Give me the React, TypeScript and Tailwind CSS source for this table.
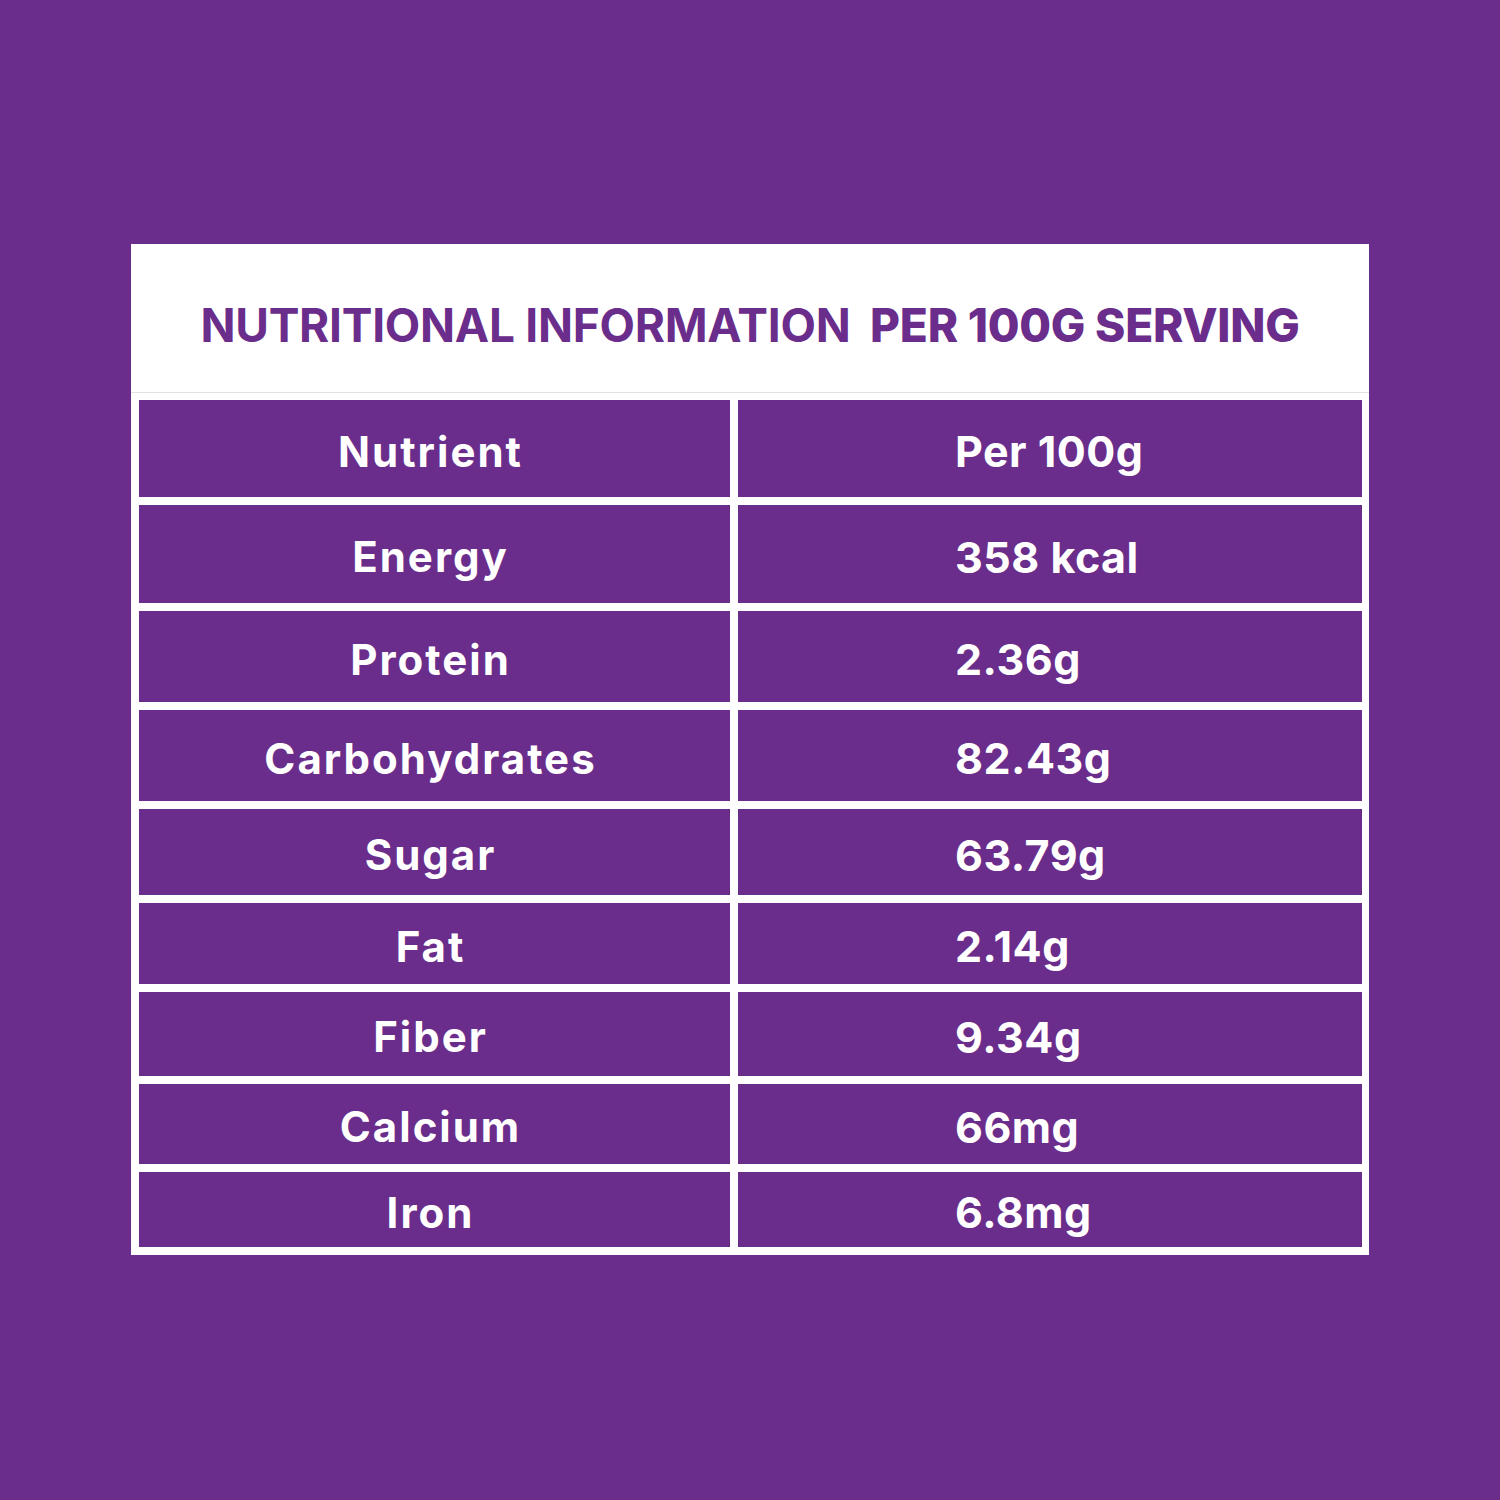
import React from "react";

const rows: { n: string; v: string; h: number }[] = [
  { n: "Nutrient", v: "Per 100g", h: 97 },
  { n: "Energy", v: "358 kcal", h: 98 },
  { n: "Protein", v: "2.36g", h: 91 },
  { n: "Carbohydrates", v: "82.43g", h: 91 },
  { n: "Sugar", v: "63.79g", h: 86 },
  { n: "Fat", v: "2.14g", h: 81 },
  { n: "Fiber", v: "9.34g", h: 84 },
  { n: "Calcium", v: "66mg", h: 80 },
  { n: "Iron", v: "6.8mg", h: 75 },
];

export default function App() {
  return (
    <div
      className="w-[1500px] h-[1500px] bg-[#6a2d8b] pt-[244px] pl-[131px]"
      style={{ fontFamily: "Inter, 'Noto Sans', sans-serif" }}
    >
      <div className="w-[1238px] bg-white pb-[8px]">
        <div className="h-[149px] border-b border-[#e2e2e2] flex items-center justify-center pt-[14px]">
          <h1 className="text-[46px] leading-none text-[#6a2d8b] tracking-[-0.25px] whitespace-pre">
            <span className="font-bold">NUTRITIONAL INFORMATION</span>
            <span className="font-extrabold">{"  PER 100G SERVING"}</span>
          </h1>
        </div>
        <div className="pt-[7px] pl-[8px] pr-[7px] flex flex-col gap-[8px]">
          {rows.map((r) => (
            <div key={r.n} className="grid grid-cols-[591px_624px] gap-x-[8px]">
              <div
                className="bg-[#6a2d8b] flex items-center justify-center pr-[8px] pt-[6px] text-white font-bold text-[42px] leading-none tracking-[2px]"
                style={{ height: r.h }}
              >
                {r.n}
              </div>
              <div
                className="bg-[#6a2d8b] flex items-center pl-[217px] pt-[6px] text-white font-bold text-[43px] leading-none tracking-[0.5px]"
                style={{ height: r.h }}
              >
                {r.v}
              </div>
            </div>
          ))}
        </div>
      </div>
    </div>
  );
}
